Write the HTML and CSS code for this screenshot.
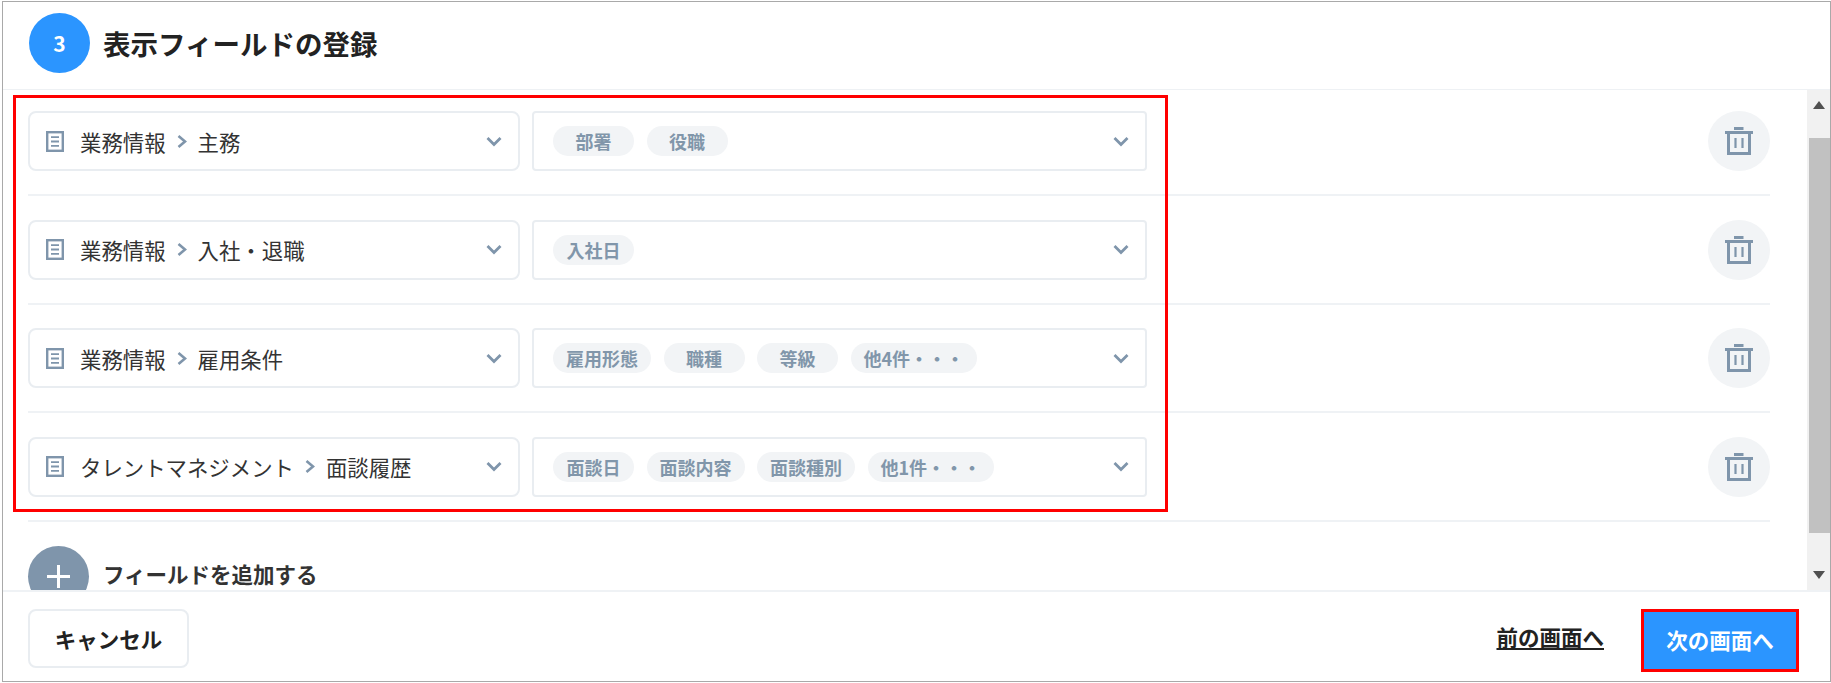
FILE: index.html
```html
<!DOCTYPE html>
<html lang="ja">
<head>
    <meta charset="UTF-8">
    <title>表示フィールドの登録</title>
    <link rel="stylesheet" href="styles.css">
</head>
<body>
  <svg class="icon-defs" width="0" height="0">
    <symbol id="doc" viewBox="0 0 18 21">
      <rect x="1.2" y="1.2" width="15.6" height="18.6" fill="none" stroke="currentColor" stroke-width="2.4"/>
      <path d="M5 6.200h8M5 10.500h8M5 14.800h8" fill="none" stroke="currentColor" stroke-width="1.800"/>
    </symbol>
    <symbol id="chevron" viewBox="0 0 16 11">
      <path d="M1.500 2L8 8.500 14.500 2" fill="none" stroke="currentColor" stroke-width="2.800"/>
    </symbol>
    <symbol id="sep" viewBox="0 0 10 13">
      <path d="M1.500 1l6.500 5.500-6.500 5.500" fill="none" stroke="currentColor" stroke-width="2.600"/>
    </symbol>
    <symbol id="trash" viewBox="0 0 28 28">
      <rect x="9" y="0" width="9.500" height="3" fill="currentColor"/>
      <rect x="0" y="4" width="28" height="3" fill="currentColor"/>
      <path d="M3.500 6v20.500h21V6" fill="none" stroke="currentColor" stroke-width="3"/>
      <path d="M10.500 11v10M17.500 11v10" fill="none" stroke="currentColor" stroke-width="2.200"/>
    </symbol>
  </svg>

  <div class="frame">
    <header class="head">
      <span class="step">3</span>
      <h2>表示フィールドの登録</h2>
    </header>

    <div class="middle">
      <div class="content">
        <div class="row">
          <div class="select field">
            <svg class="doc"><use href="#doc"/></svg>
            <span>業務情報</span>
            <svg class="sep"><use href="#sep"/></svg>
            <span>主務</span>
            <svg class="chevron"><use href="#chevron"/></svg>
          </div>
          <div class="select values">
            <span class="tag">部署</span>
            <span class="tag">役職</span>
            <svg class="chevron"><use href="#chevron"/></svg>
          </div>
          <button class="delete"><svg class="trash"><use href="#trash"/></svg></button>
        </div>

        <div class="row">
          <div class="select field">
            <svg class="doc"><use href="#doc"/></svg>
            <span>業務情報</span>
            <svg class="sep"><use href="#sep"/></svg>
            <span>入社・退職</span>
            <svg class="chevron"><use href="#chevron"/></svg>
          </div>
          <div class="select values">
            <span class="tag">入社日</span>
            <svg class="chevron"><use href="#chevron"/></svg>
          </div>
          <button class="delete"><svg class="trash"><use href="#trash"/></svg></button>
        </div>

        <div class="row">
          <div class="select field">
            <svg class="doc"><use href="#doc"/></svg>
            <span>業務情報</span>
            <svg class="sep"><use href="#sep"/></svg>
            <span>雇用条件</span>
            <svg class="chevron"><use href="#chevron"/></svg>
          </div>
          <div class="select values">
            <span class="tag">雇用形態</span>
            <span class="tag">職種</span>
            <span class="tag">等級</span>
            <span class="tag">他4件・・・</span>
            <svg class="chevron"><use href="#chevron"/></svg>
          </div>
          <button class="delete"><svg class="trash"><use href="#trash"/></svg></button>
        </div>

        <div class="row">
          <div class="select field">
            <svg class="doc"><use href="#doc"/></svg>
            <span>タレントマネジメント</span>
            <svg class="sep"><use href="#sep"/></svg>
            <span>面談履歴</span>
            <svg class="chevron"><use href="#chevron"/></svg>
          </div>
          <div class="select values">
            <span class="tag">面談日</span>
            <span class="tag">面談内容</span>
            <span class="tag">面談種別</span>
            <span class="tag">他1件・・・</span>
            <svg class="chevron"><use href="#chevron"/></svg>
          </div>
          <button class="delete"><svg class="trash"><use href="#trash"/></svg></button>
        </div>

        <div class="add">
          <span class="plus"></span>
          <span class="add-label">フィールドを追加する</span>
        </div>
      </div>

      <div class="scrollbar">
        <span class="arrow up"></span>
        <div class="track"><div class="thumb"></div></div>
        <span class="arrow down"></span>
      </div>
    </div>

    <footer class="foot">
      <button class="cancel">キャンセル</button>
      <a class="prev" href="#">前の画面へ</a>
      <button class="next">次の画面へ</button>
    </footer>

    <!-- red annotation round the rows -->
    <div class="callout"></div>
  </div>
</body>
</html>
```

FILE: styles.css
```css
*{
    box-sizing: border-box;
}

body{
    margin: 0;
    font-family: "Noto Sans CJK JP", "Noto Sans", sans-serif;
    background-color: #fff;
    color: #333;
}

.icon-defs{
    position: absolute;
}

.frame{
    position: relative;
    display: flex;
    flex-direction: column;
    width: 1829px;
    height: 681px;
    margin: 1px 0 0 2px;
    border: 1px solid #a9a9a9;
    background: #fff;
}

.head{
    display: flex;
    align-items: center;
    height: 88px;
    padding-left: 26px;
    border-bottom: 1px solid #eef1f4;
}

.step{
    display: flex;
    align-items: center;
    justify-content: center;
    width: 61px;
    height: 60px;
    margin-top: -6px;
    border-radius: 50%;
    background-color: #2b95ff;
    color: #fff;
    font-size: 21px;
    font-weight: 700;
}

.head h2{
    margin: -5px 0 0 13px;
    font-size: 27.500px;
    font-weight: 700;
    color: #222;
}

.middle{
    display: flex;
    flex: 1;
    min-height: 0;
}

.content{
    flex: 1;
    overflow: hidden;
    padding: 21px 37px 0 25px;
}

.row{
    display: flex;
    align-items: center;
    height: 108.67px;
    padding: 23.67px 0 23px;
    border-bottom: 2px solid #eff2f5;
}

.row:first-child{
    height: 85px;
    padding-top: 0;
}

.select{
    display: flex;
    align-items: center;
    height: 60px;
    border: 2px solid #e9edf1;
    background: #fff;
}

.field{
    width: 492px;
    padding: 0 16px;
    border-radius: 8px;
    font-size: 21.400px;
}

.doc{
    width: 18px;
    height: 21px;
    margin-right: 16px;
    color: #7f95ab;
}

.sep{
    width: 10px;
    height: 13px;
    margin: 0 11px;
    color: #7f95ab;
}

.chevron{
    width: 16px;
    height: 11px;
    margin-left: auto;
    color: #7f95ab;
}

.values{
    width: 615px;
    margin-left: 12px;
    padding: 0 16px 0 19px;
    border-radius: 4px;
    gap: 12.500px;
}

.tag{
    min-width: 81px;
    height: 30px;
    padding: 0 13px;
    border-radius: 15px;
    background-color: #f2f4f6;
    color: #8196aa;
    font-size: 18px;
    font-weight: 700;
    line-height: 30px;
    text-align: center;
}

.delete{
    display: flex;
    align-items: center;
    justify-content: center;
    width: 62px;
    height: 60px;
    margin-left: auto;
    padding: 0;
    border: none;
    border-radius: 50%;
    background-color: #f2f4f6;
    color: #7f95ab;
}

.trash{
    width: 28px;
    height: 28px;
}

.add{
    display: flex;
    align-items: flex-start;
    padding-top: 24px;
}

.plus{
    position: relative;
    flex: none;
    width: 61px;
    height: 61px;
    border-radius: 50%;
    background-color: #7f95ab;
}

.plus::before, .plus::after{
    content: "";
    position: absolute;
    left: 19px;
    top: 29px;
    width: 23px;
    height: 3px;
    background: #fff;
}

.plus::after{
    transform: rotate(90deg);
}

.add-label{
    margin: 15px 0 0 14px;
    font-size: 21.500px;
    font-weight: 700;
    line-height: 26px;
    color: #333;
}

.scrollbar{
    display: flex;
    flex-direction: column;
    width: 23px;
    background-color: #f1f1f1;
}

.arrow{
    flex: none;
    height: 48px;
    display: flex;
    justify-content: center;
}

.arrow::before{
    content: "";
    width: 0;
    height: 0;
    border-left: 6px solid transparent;
    border-right: 6px solid transparent;
}

.arrow.up::before{
    margin-top: 11px;
    border-bottom: 8px solid #505050;
}

.arrow.down{
    align-items: flex-end;
}

.arrow.down::before{
    margin-bottom: 11px;
    border-top: 8px solid #505050;
}

.track{
    flex: 1;
    padding-left: 2px;
}

.thumb{
    height: 395px;
    background-color: #c1c1c1;
}

.foot{
    display: flex;
    align-items: flex-start;
    height: 91px;
    padding: 17px 31px 0 25px;
    border-top: 2px solid #eff2f5;
}

.cancel{
    width: 161px;
    height: 59px;
    border: 2px solid #e9edf1;
    border-radius: 8px;
    background: #fff;
    color: #222;
    font-family: inherit;
    font-size: 21.500px;
    font-weight: 700;
}

.prev{
    margin: 12px 37px 0 auto;
    color: #222;
    font-size: 21.500px;
    font-weight: 700;
}

.next{
    width: 158px;
    height: 63px;
    padding: 0 0 2px;
    border: 3px solid #f00;
    background-color: #2b95ff;
    color: #fff;
    font-family: inherit;
    font-size: 21.500px;
    font-weight: 700;
}

.callout{
    position: absolute;
    left: 10px;
    top: 93px;
    width: 1155px;
    height: 417px;
    border: 3px solid #f00;
    pointer-events: none;
}
```
